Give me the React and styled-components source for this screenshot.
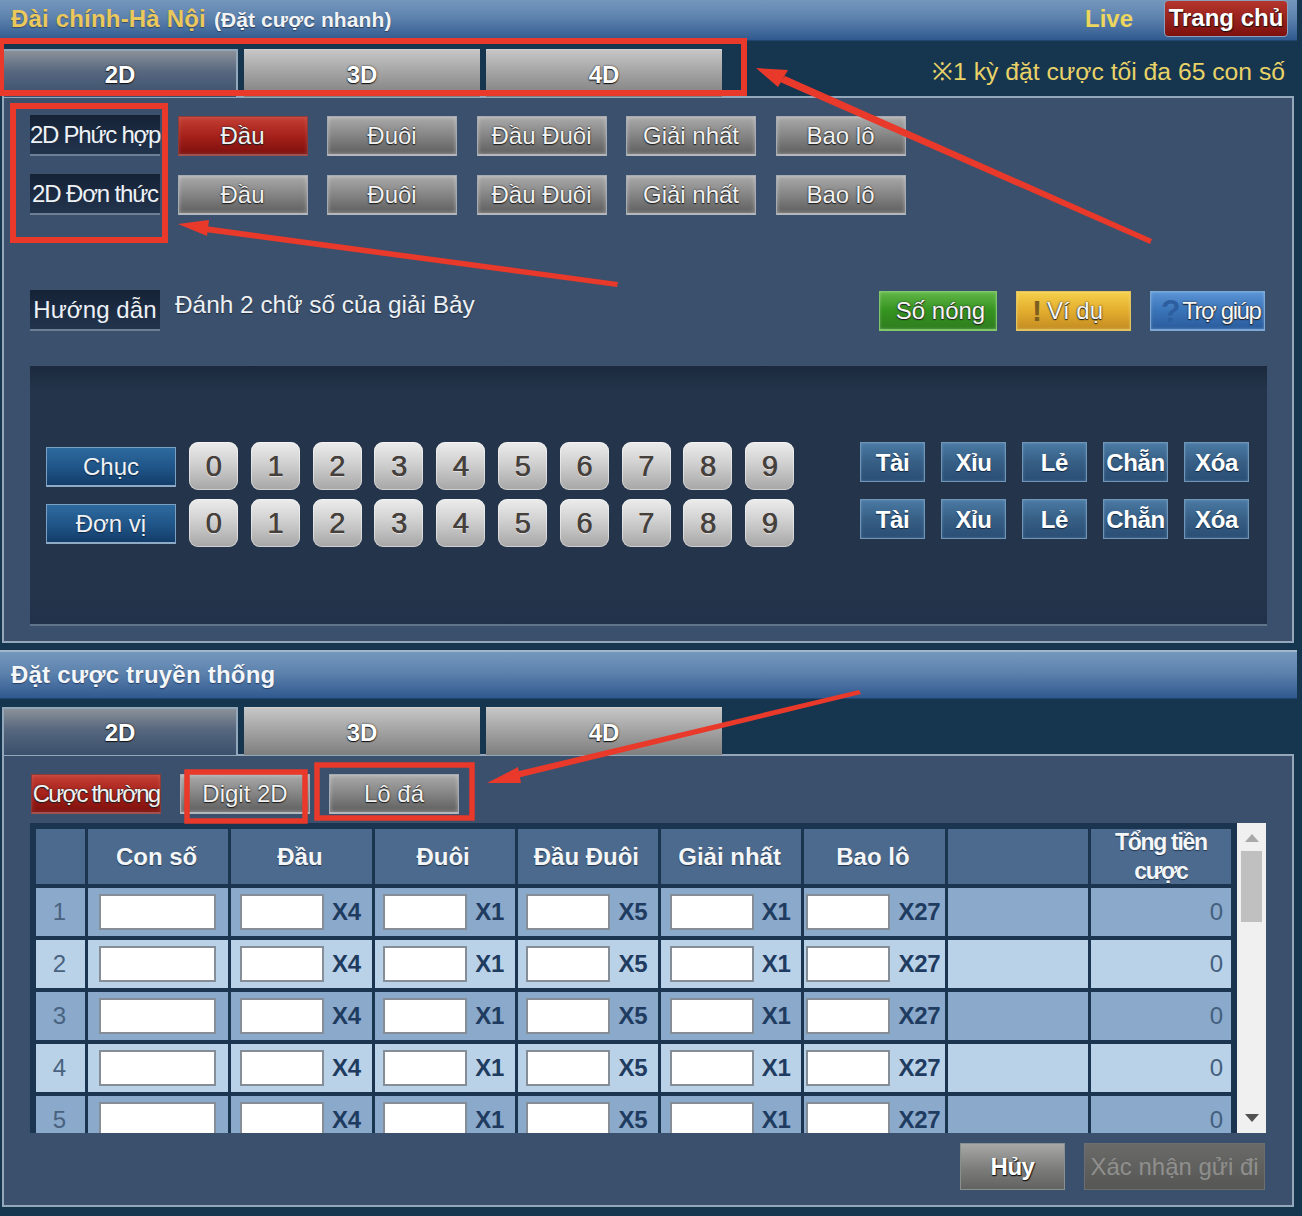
import React from "react";
import styled, { createGlobalStyle, css } from "styled-components";

const Global = createGlobalStyle`
  * { box-sizing: border-box; }
  html, body { margin: 0; padding: 0; background: #16364f; }
  body { font-family: "Liberation Sans", Arial, sans-serif; overflow: hidden; }
  button { font-family: inherit; cursor: pointer; padding: 0; margin: 0; }
`;

const softDark = "0 1px 1px #1c1c1c, 0 0 2px #2a2a2a";
const softLight = "0 1px 1px rgba(255,255,255,.55)";

const Page = styled.div`
  position: relative;
  width: 1302px;
  height: 1216px;
  overflow: hidden;
  background: #16364f;
`;

const BarBase = css`
  width: 1297px;
  display: flex;
  align-items: center;
  background: linear-gradient(#7597bd 0%, #5c82ad 45%, #30598f 100%);
`;

const TopBar = styled.header`
  ${BarBase}
  height: 41px;
  padding: 0 9px 3px 11px;
  border-bottom: 1px solid #20456f;
`;

const Title = styled.h1`
  margin: 0;
  font-size: 24px;
  font-weight: 700;
  letter-spacing: .18px;
  color: #eac85c;
  text-shadow: 0 1px 1px rgba(40, 50, 70, .6);
  white-space: nowrap;
`;

const TitleNote = styled.span`
  margin-left: 8px;
  font-size: 21px;
  letter-spacing: .1px;
  color: #f2f4f6;
  text-shadow: 0 1px 1px #2a3a55;
`;

const LiveLink = styled.span`
  margin-left: auto;
  font-size: 24px;
  font-weight: 700;
  color: #ecd65c;
`;

const HomeButton = styled.button`
  margin-left: 31px;
  margin-top: -1px;
  width: 124px;
  height: 37px;
  font-size: 24px;
  font-weight: 700;
  color: #fff;
  border: 1px solid #8aa0bd;
  border-radius: 4px;
  background: linear-gradient(#b5352c, #7d100e);
  text-shadow: 0 1px 1px #221010, 1px 1px 1px #3a1212;
`;

const SectionBar = styled.header`
  ${BarBase}
  height: 49px;
  margin-top: 7px;
  padding-left: 11px;
  border-top: 2px solid #a3b7cc;
  border-bottom: 1px solid #20456f;
  font-size: 24px;
  font-weight: 700;
  letter-spacing: .22px;
  color: #f4f6f8;
  text-shadow: 0 1px 1px #27406a;
`;

const TabRow = styled.div`
  position: relative;
  z-index: 1;
  display: flex;
  align-items: flex-end;
  gap: 6px;
  height: 56px;
  padding-left: 2px;
  padding-right: 17px;
  margin-bottom: -1px;
`;

const Tab = styled.div`
  width: 236px;
  height: 48px;
  display: flex;
  align-items: center;
  justify-content: center;
  font-size: 24px;
  font-weight: 700;
  color: #fff;
  padding-top: 2px;
  text-shadow: 0 1px 1px #111, 0 0 2px #222;
  ${(p) =>
    p.$active
      ? css`
          border: 2px solid #94a7ba;
          border-bottom: none;
          background: linear-gradient(#8b9199 0%, #56677f 45%, #3b506c 100%);
        `
      : css`
          border-top: 1px solid #d0d0d0;
          background: linear-gradient(#c6c6c6 0%, #a2a2a2 50%, #7f7f7f 100%);
        `}
`;

const RowNote = styled.div`
  margin-left: auto;
  align-self: center;
  padding-top: 2px;
  font-size: 24.7px;
  color: #e9d267;
  white-space: nowrap;
`;

const Panel = styled.section`
  width: 1292px;
  height: ${(p) => p.$height}px;
  margin-left: 2px;
  border: 2px solid #94a7ba;
  background: #3b506c;
`;

const BetGrid = styled.div`
  display: grid;
  grid-template-columns: 130px repeat(5, 130px);
  column-gap: 19.5px;
  row-gap: 19px;
  padding: 18px 0 0 26px;
`;

const SideLabel = styled.div`
  width: 130px;
  height: 41px;
  display: flex;
  align-items: center;
  justify-content: center;
  font-size: 24px;
  letter-spacing: ${(p) => p.$tight || 0}px;
  white-space: nowrap;
  color: #eef2f6;
  background: linear-gradient(#152236, #22344d);
  border-bottom: 2px solid #6c7f94;
`;

const BetLabel = styled(SideLabel)`
  margin-top: -1px;
`;

const ModeButton = styled.button`
  width: 130px;
  height: 40px;
  font-size: 24px;
  letter-spacing: ${(p) => p.$tight || 0}px;
  white-space: nowrap;
  color: #f2f2f2;
  text-shadow: ${softDark};
  border: 1px solid ${(p) => (p.$active ? "#8e3a38" : "#a5abb1")};
  border-bottom: 2px solid ${(p) => (p.$active ? "#a0524e" : "#b4b8bc")};
  box-shadow: inset 0 0 4px rgba(255, 255, 255, ${(p) => (p.$active ? 0.15 : 0.4)});
  background: ${(p) =>
    p.$active
      ? "linear-gradient(#c43f34, #a31f19 55%, #7e100d)"
      : "linear-gradient(#a9a9a9, #858585 50%, #5f5f5f)"};
`;

const ModeSlot = styled.div`
  margin-left: -2px;
`;

const GuideRow = styled.div`
  display: flex;
  align-items: flex-start;
  margin-top: 75px;
  padding: 0 27px 0 26px;
`;

const GuideText = styled.p`
  margin: 0 0 0 15px;
  font-size: 24.4px;
  line-height: 28px;
  color: #eef1f4;
  text-shadow: 0 1px 1px #1d2a3d;
  white-space: nowrap;
  padding-top: 1px;
`;

const ActionGroup = styled.div`
  display: flex;
  gap: 19px;
  margin-left: auto;
  padding-top: 1px;
`;

const toneMap = {
  green: ["#61b647", "#35931f", "#2f7d1f", "#7fc86a"],
  gold: ["#f4cf4a", "#e4ae2f", "#c48d21", "#e2c25a"],
  blue: ["#5a94d6", "#3a74b8", "#2a5c9d", "#7aa8d6"],
};

const ToneButton = styled.button`
  width: ${(p) => p.$width}px;
  height: 40px;
  display: flex;
  align-items: center;
  justify-content: ${(p) => (p.$start ? "flex-start" : "center")};
  padding-left: ${(p) => p.$pad || 0}px;
  font-size: 24px;
  letter-spacing: ${(p) => p.$tight || 0}px;
  white-space: nowrap;
  color: #f6f6f6;
  text-shadow: ${softDark};
  border: 1px solid ${(p) => toneMap[p.$tone][3]};
  border-bottom-width: 2px;
  box-shadow: inset 0 0 3px rgba(255, 255, 255, .3);
  background: linear-gradient(${(p) => toneMap[p.$tone].slice(0, 3).join(",")});
`;

const Mark = styled.b`
  font-size: ${(p) => p.$size}px;
  line-height: 1;
  color: ${(p) => p.$color};
  text-shadow: none;
  margin-right: ${(p) => p.$gap}px;
`;

const NumberBoard = styled.div`
  width: 1237px;
  height: 260px;
  margin: 35px 0 0 26px;
  padding: 76px 0 0 16px;
  background: linear-gradient(#1b2a3d 0, #24344b 26px, #24344b 230px, #21314a 100%);
  border-bottom: 2px solid #61748a;
`;

const NumberLine = styled.div`
  display: flex;
  align-items: flex-start;
  height: 48px;
  margin-bottom: 9px;
`;

const PlaceButton = styled.button`
  width: 130px;
  height: 40px;
  margin: 5px 13px 0 0;
  font-size: 24px;
  color: #f0f3f6;
  text-shadow: 0 1px 1px #10243c;
  border: 1px solid #7ba0c2;
  border-bottom: 2px solid #8eaac4;
  background: linear-gradient(#2e6a9f, #1f5487 55%, #133d6a);
`;

const DigitRow = styled.div`
  display: flex;
  gap: 12.8px;
`;

const Digit = styled.button`
  width: 49px;
  height: 48px;
  border: none;
  border-radius: 9px;
  font-size: 29px;
  font-weight: 400;
  color: #45403c;
  text-shadow: .6px 0 0 #45403c, ${softLight};
  background: linear-gradient(#ececec, #d0d0d0 45%, #a6a6a6);
  box-shadow: inset 0 0 0 1px rgba(255, 255, 255, .45);
`;

const QuickRow = styled.div`
  display: flex;
  gap: 16px;
  margin-left: 65.8px;
`;

const QuickButton = styled.button`
  width: 65px;
  height: 40px;
  padding-top: 1px;
  font-size: 24px;
  font-weight: 700;
  letter-spacing: -.4px;
  white-space: nowrap;
  overflow: visible;
  color: #fff;
  text-shadow: 0 1px 1px #10243c;
  border: 1px solid #6f95b8;
  box-shadow: inset 0 0 3px rgba(160, 195, 225, .35);
  background: linear-gradient(#4a7aa3, #375f86 50%, #2a4d73);
`;

const SubTabs = styled.div`
  display: flex;
  gap: 19px;
  padding: 18px 0 0 27px;
`;

const TableFrame = styled.div`
  display: flex;
  width: 1236px;
  height: 310px;
  margin: 9px 0 0 26px;
  overflow: hidden;
  background: #1b3550;
`;

const Sheet = styled.div`
  display: grid;
  flex: none;
  width: 1207px;
  height: 310px;
  overflow: hidden;
  padding: 6px 0 0 6px;
  grid-template-columns: 49px repeat(8, 140.25px);
  grid-auto-rows: 48px;
  grid-template-rows: 55px;
  column-gap: 3px;
  row-gap: 4px;
  align-content: start;
`;

const HeadCell = styled.div`
  display: flex;
  align-items: center;
  justify-content: center;
  text-align: center;
  padding-right: ${(p) => (p.$small ? 0 : 3)}px;
  font-size: ${(p) => (p.$small ? 23 : 24)}px;
  line-height: ${(p) => (p.$small ? 29 : 28)}px;
  font-weight: 700;
  letter-spacing: ${(p) => (p.$small ? -1.3 : 0)}px;
  color: #f4f6f8;
  text-shadow: 0 1px 1px #20354f;
  background: #4c6a8d;
`;

const BodyCell = styled.div`
  display: flex;
  align-items: center;
  justify-content: ${(p) => p.$align || "center"};
  gap: 8px;
  padding: ${(p) => (p.$align ? "0 8px 0 0" : "0 2px 0 0")};
  background: ${(p) => (p.$odd ? "#8aa9cb" : "#bad2e8")};
`;

const IndexText = styled.span`
  font-size: 24px;
  color: #48627f;
`;

const Odds = styled.span`
  font-size: 24px;
  font-weight: 700;
  letter-spacing: -.3px;
  color: #1f3c60;
`;

const ZeroText = styled.span`
  font-size: 24px;
  color: #43607f;
`;

const Field = styled.input`
  width: ${(p) => p.$width}px;
  height: 36px;
  flex: none;
  border: 2px solid #858e96;
  background: #fff;
  outline: none;
  padding: 0;
`;

const Scrollbar = styled.div`
  flex: none;
  width: 29px;
  display: flex;
  flex-direction: column;
  align-items: center;
  padding: 11px 0 11px;
  background: #f0f0f0;
`;

const ScrollThumb = styled.div`
  width: 21px;
  height: 71px;
  margin-top: 9px;
  background: #c0c0c0;
`;

const ScrollSpace = styled.div`
  flex: 1;
`;

const FooterActions = styled.div`
  display: flex;
  justify-content: flex-end;
  gap: 19px;
  padding: 10px 27px 0 0;
`;

const FootButton = styled.button`
  width: ${(p) => p.$width}px;
  height: 47px;
  border: 1px solid #8a8f90;
  white-space: nowrap;
  overflow: hidden;
  font-size: 24px;
  ${(p) =>
    p.$disabled
      ? css`
          color: #8f8f8d;
          background: linear-gradient(#6a6a68, #565654);
          border-color: #6d6f6e;
        `
      : css`
          font-weight: 700;
          color: #fff;
          letter-spacing: -.5px;
          text-shadow: 0 1px 1px #111, 1px 1px 1px #222;
          background: linear-gradient(#a8a8a6, #7c7c7a 55%, #626260);
        `}
`;

const Marks = styled.svg`
  position: absolute;
  left: 0;
  top: 0;
  z-index: 5;
  pointer-events: none;
`;

const modes = ["Đầu", "Đuôi", "Đầu Đuôi", "Giải nhất", "Bao lô"];
const digits = [0, 1, 2, 3, 4, 5, 6, 7, 8, 9];
const quick = ["Tài", "Xỉu", "Lẻ", "Chẵn", "Xóa"];
const tabs = ["2D", "3D", "4D"];
const payouts = ["X4", "X1", "X5", "X1", "X27"];

function Tabs({ note }) {
  return (
    <TabRow>
      {tabs.map((t, i) => (
        <Tab key={t} $active={i === 0}>{t}</Tab>
      ))}
      {note && <RowNote>{note}</RowNote>}
    </TabRow>
  );
}

function BetRow({ label, tight, activeFirst }) {
  return (
    <>
      <BetLabel $tight={tight}>{label}</BetLabel>
      {modes.map((m, i) => (
        <ModeSlot key={m}>
          <ModeButton $active={activeFirst && i === 0}>{m}</ModeButton>
        </ModeSlot>
      ))}
    </>
  );
}

function NumberRow({ label }) {
  return (
    <NumberLine>
      <PlaceButton>{label}</PlaceButton>
      <DigitRow>
        {digits.map((d) => (
          <Digit key={d}>{d}</Digit>
        ))}
      </DigitRow>
      <QuickRow>
        {quick.map((q) => (
          <QuickButton key={q}>{q}</QuickButton>
        ))}
      </QuickRow>
    </NumberLine>
  );
}

function SheetRow({ n }) {
  const odd = n % 2 === 1;
  return (
    <>
      <BodyCell $odd={odd}><IndexText>{n}</IndexText></BodyCell>
      <BodyCell $odd={odd}><Field $width={117} /></BodyCell>
      {payouts.map((x, i) => (
        <BodyCell key={i} $odd={odd}>
          <Field $width={84} />
          <Odds>{x}</Odds>
        </BodyCell>
      ))}
      <BodyCell $odd={odd} />
      <BodyCell $odd={odd} $align="flex-end"><ZeroText>0</ZeroText></BodyCell>
    </>
  );
}

function Arrow({ shaft, head }) {
  return (
    <>
      <polygon points={shaft} fill="#e8392b" />
      <polygon points={head} fill="#e8392b" />
    </>
  );
}

export default function App() {
  return (
    <Page>
      <Global />
      <TopBar>
        <Title>
          Đài chính-Hà Nội<TitleNote>(Đặt cược nhanh)</TitleNote>
        </Title>
        <LiveLink>Live</LiveLink>
        <HomeButton>Trang chủ</HomeButton>
      </TopBar>
      <Tabs note="※1 kỳ đặt cược tối đa 65 con số" />
      <Panel $height={547}>
        <BetGrid>
          <BetRow label="2D Phức hợp" tight={-1.25} activeFirst />
          <BetRow label="2D Đơn thức" tight={-1.15} />
        </BetGrid>
        <GuideRow>
          <SideLabel $tight={0.1}>Hướng dẫn</SideLabel>
          <GuideText>Đánh 2 chữ số của giải Bảy</GuideText>
          <ActionGroup>
            <ToneButton $tone="green" $width={118} $pad={5}>Số nóng</ToneButton>
            <ToneButton $tone="gold" $width={115} $start $pad={15}>
              <Mark $color="#7c5f20" $size={30} $gap={5}>!</Mark>Ví dụ
            </ToneButton>
            <ToneButton $tone="blue" $width={115} $start $pad={10} $tight={-1.4}>
              <Mark $color="#2c5ea0" $size={32} $gap={3}>?</Mark>Trợ giúp
            </ToneButton>
          </ActionGroup>
        </GuideRow>
        <NumberBoard>
          <NumberRow label="Chục" />
          <NumberRow label="Đơn vị" />
        </NumberBoard>
      </Panel>

      <SectionBar>Đặt cược truyền thống</SectionBar>
      <Tabs />
      <Panel $height={453}>
        <SubTabs>
          <ModeButton $active $tight={-1.8}>Cược thường</ModeButton>
          <ModeButton>Digit 2D</ModeButton>
          <ModeButton>Lô đá</ModeButton>
        </SubTabs>
        <TableFrame>
          <Sheet>
            <HeadCell />
            {["Con số", "Đầu", "Đuôi", "Đầu Đuôi", "Giải nhất", "Bao lô", ""].map((h, i) => (
              <HeadCell key={i}>{h}</HeadCell>
            ))}
            <HeadCell $small>Tổng tiền<br />cược</HeadCell>
            {[1, 2, 3, 4, 5].map((n) => (
              <SheetRow key={n} n={n} />
            ))}
          </Sheet>
          <Scrollbar>
            <svg width="14" height="8" viewBox="0 0 14 8"><polygon points="7,0 14,8 0,8" fill="#a9a9a9" /></svg>
            <ScrollThumb />
            <ScrollSpace />
            <svg width="14" height="8" viewBox="0 0 14 8"><polygon points="0,0 14,0 7,8" fill="#505050" /></svg>
          </Scrollbar>
        </TableFrame>
        <FooterActions>
          <FootButton $width={105}>Hủy</FootButton>
          <FootButton $width={181} $disabled>Xác nhận gửi đi</FootButton>
        </FooterActions>
      </Panel>

      <Marks width="1302" height="1216" viewBox="0 0 1302 1216">
        <g fill="none" stroke="#e8392b" strokeWidth="6">
          <rect x="1" y="41" width="743" height="52" />
          <rect x="13" y="106" width="152" height="134" />
          <rect x="187" y="772" width="118" height="49" strokeWidth="5.5" />
          <rect x="317" y="765" width="155" height="53" strokeWidth="5.5" />
        </g>
        <Arrow
          shaft="785,76 1152,239 1150,244 780,82"
          head="756,68 788,70 778,87"
        />
        <Arrow
          shaft="205,226 618,282 617,287 205,232"
          head="178,224 209,220 207,236"
        />
        <Arrow
          shaft="515,772 859,690 861,694 517,778"
          head="487,783 518,767 521,783"
        />
      </Marks>
    </Page>
  );
}
